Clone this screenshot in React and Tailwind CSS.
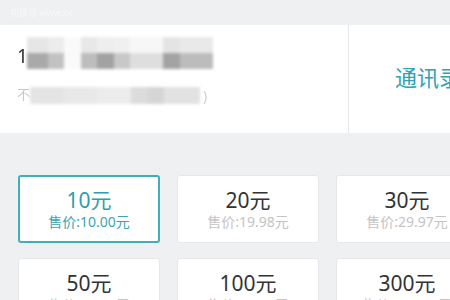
const cards = [
  { face: '10元', price: '售价:10.00元', active: true },
  { face: '20元', price: '售价:19.98元' },
  { face: '30元', price: '售价:29.97元' },
  { face: '50元', price: '售价:49.95元' },
  { face: '100元', price: '售价:99.90元' },
  { face: '300元', price: '售价:299.70元' },
];

// blurred mosaic cells for the masked phone number
const topCells = [
  ['w-[21px]', 'bg-[#e6e6e6]', 'bg-[#a9a9a9]'],
  ['w-[16px]', 'bg-[#ececec]', 'bg-[#c2c2c2]'],
  ['w-[17px]', 'bg-[#fafafa]', 'bg-[#fafafa]'],
  ['w-[16px]', 'bg-[#e8e8e8]', 'bg-[#bdbdbd]'],
  ['w-[17px]', 'bg-[#eeeeee]', 'bg-[#a2a2a2]'],
  ['w-[16px]', 'bg-[#f0f0f0]', 'bg-[#c8c8c8]'],
  ['w-[33px]', 'bg-[#f7f7f7]', 'bg-[#dedede]'],
  ['w-[17px]', 'bg-[#e4e4e4]', 'bg-[#a3a3a3]'],
  ['w-[33px]', 'bg-[#e9e9e9]', 'bg-[#bcbcbc]'],
];

const bottomCells = [
  ['w-[34px]', 'bg-[#e4e4e4]'],
  ['w-[33px]', 'bg-[#e8e8e8]'],
  ['w-[34px]', 'bg-[#ececec]'],
  ['w-[16px]', 'bg-[#dcdcdc]'],
  ['w-[17px]', 'bg-[#d6d6d6]'],
  ['w-[36px]', 'bg-[#e2e2e2]'],
];

function Card({ face, price, active }) {
  return (
    <div
      className={
        active
          ? 'h-[68px] rounded-[3px] border-2 border-[#42aebb] bg-white flex flex-col items-center justify-center'
          : 'h-[68px] rounded-[3px] border border-[#e6e7ea] bg-white flex flex-col items-center justify-center'
      }
    >
      <div className={active ? 'text-[21px] leading-[25px] text-[#2e9eac]' : 'text-[21px] leading-[25px] text-[#333333]'}>
        {face}
      </div>
      <div className={active ? 'text-[14px] leading-[18px] text-[#3aa4b3]' : 'text-[14px] leading-[18px] text-[#c4c4c4]'}>
        {price}
      </div>
    </div>
  );
}

export default function App() {
  return (
    <div
      className="w-[450px] h-[300px] overflow-hidden bg-[#eff0f2]"
      style={{ fontFamily: '"Noto Sans", "Noto Sans CJK SC", sans-serif' }}
    >
      <div className="h-[25px] flex items-center pl-[10px] text-[9px] text-[#f8f8f8] blur-[0.6px]">
        初级号 www.xx
      </div>

      <div className="h-[108px] bg-white flex overflow-hidden">
        <div className="w-[349px] shrink-0 border-r border-[#e4e6e9] pl-[17px] pt-[12px]">
          <div className="flex items-end h-[32px]">
            <span className="text-[19px] leading-[26px] text-[#333] w-[10px] blur-[0.5px]">1</span>
            <div className="flex blur-[1.5px]">
              {topCells.map(([w, a, b], i) => (
                <div key={i} className={`${w} flex flex-col`}>
                  <div className={`h-[16px] ${a}`} />
                  <div className={`h-[16px] ${b}`} />
                </div>
              ))}
            </div>
          </div>
          <div className="flex items-center h-[18px] mt-[17px]">
            <span className="text-[13px] text-[#c8c8c8] w-[13px] blur-[0.5px]">不</span>
            <div className="flex blur-[1.5px]">
              {bottomCells.map(([w, c], i) => (
                <div key={i} className={`${w} h-[17px] ${c}`} />
              ))}
            </div>
            <span className="ml-[3px] text-[14px] text-[#d0d0d0] blur-[0.6px]">)</span>
          </div>
        </div>
        <div className="flex-1 min-w-0 flex items-center pl-[46px] pb-[4px]">
          <span className="text-[22px] text-[#2ea3b2] whitespace-nowrap">通讯录</span>
        </div>
      </div>

      <div className="pt-[42px] pl-[18px]">
        <div className="grid grid-cols-[142px_142px_142px] gap-x-[17px] gap-y-[15px]">
          {cards.map((c) => (
            <Card key={c.face} {...c} />
          ))}
        </div>
      </div>
    </div>
  );
}
